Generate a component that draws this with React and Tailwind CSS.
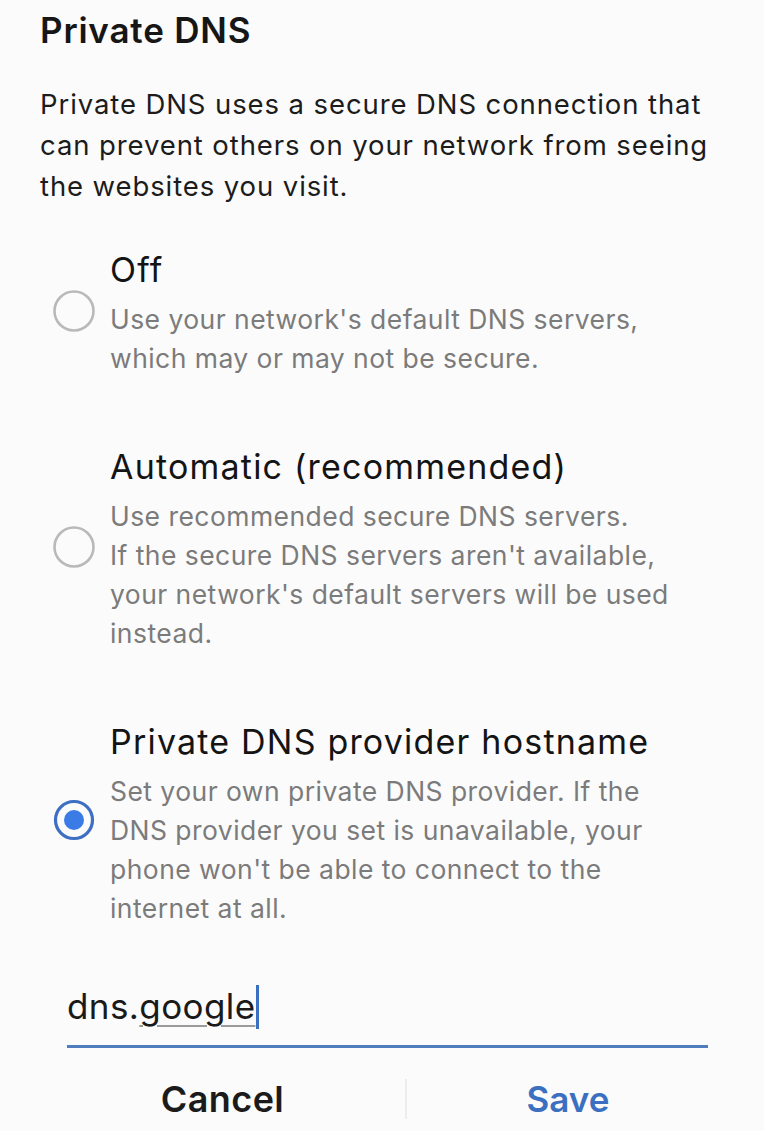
import React from "react";

const options = [
  {
    title: "Off",
    lines: ["Use your network's default DNS servers,", "which may or may not be secure."],
    selected: false,
  },
  {
    title: "Automatic (recommended)",
    lines: [
      "Use recommended secure DNS servers.",
      "If the secure DNS servers aren't available,",
      "your network's default servers will be used",
      "instead.",
    ],
    selected: false,
  },
  {
    title: "Private DNS provider hostname",
    lines: [
      "Set your own private DNS provider. If the",
      "DNS provider you set is unavailable, your",
      "phone won't be able to connect to the",
      "internet at all.",
    ],
    selected: true,
  },
];

function Radio({ selected }) {
  return (
    <svg width="44" height="44" viewBox="0 0 44 44" className="shrink-0">
      {selected ? (
        <>
          <circle cx="22" cy="22" r="18.5" fill="none" stroke="#3d6fc2" strokeWidth="3.2" />
          <circle cx="22" cy="22" r="10" fill="#3b7be6" />
        </>
      ) : (
        <circle cx="22" cy="22" r="19.5" fill="none" stroke="#b9b9b9" strokeWidth="2.6" />
      )}
    </svg>
  );
}

function Option({ title, lines, selected }) {
  return (
    <div className="flex items-center">
      <div
        className={
          "w-[70px] flex justify-start pl-[12px] " + (selected ? "mt-[-10px]" : "mt-[-6px]")
        }
      >
        <Radio selected={selected} />
      </div>
      <div className="flex flex-col">
        <div className="text-[34px] leading-[40px] tracking-[1.2px] text-[#141414]">{title}</div>
        <div className="text-[26.5px] leading-[39px] tracking-[0.45px] text-[#7b7b7b] mt-[9.5px]">
          {lines.map((l) => (
            <div key={l}>{l}</div>
          ))}
        </div>
      </div>
    </div>
  );
}

export default function App() {
  return (
    <div
      className="w-[764px] h-[1131px] overflow-hidden bg-[#fbfbfb] flex flex-col"
      style={{ fontFamily: "Inter, 'Noto Sans', sans-serif" }}
    >
      <div className="pl-[40px] pt-[9px] text-[35px] leading-[42px] tracking-[0.8px] font-semibold text-[#161616]">
        Private DNS
      </div>
      <div className="pl-[40px] pt-[32.5px] text-[27.5px] leading-[41px] tracking-[0.9px] text-[#1c1c1c]">
        <div>Private DNS uses a secure DNS connection that</div>
        <div>can prevent others on your network from seeing</div>
        <div>the websites you visit.</div>
      </div>
      <div className="flex flex-col gap-[69.5px] pl-[40px] pt-[43.5px]">
        {options.map((o) => (
          <Option key={o.title} {...o} />
        ))}
      </div>
      <div className="pl-[67px] pr-[56px] pt-[56.5px]">
        <div className="flex items-center h-[44px] text-[35px] leading-[44px] tracking-[0.4px] text-[#1a1a1a]">
          <span>dns.</span>
          <span className="underline decoration-[#9a9a9a] decoration-2 underline-offset-[6px]">google</span>
          <span className="w-[3px] h-[44px] bg-[#3b6fc2] ml-[1px] mt-[2px]" />
        </div>
        <div className="h-[3px] bg-[#4f7dbd] mt-[17px]" />
      </div>
      <div className="flex items-center pl-[40px] pt-[29px]">
        <button className="w-[365px] h-[44px] leading-[44px] text-center text-[36px] tracking-[0.4px] font-semibold text-[#1b1b1b]">
          Cancel
        </button>
        <div className="w-[2px] h-[40px] bg-[#ececec]" />
        <button className="w-[322px] h-[44px] leading-[44px] text-center text-[35px] font-semibold text-[#3b6fbf]">
          Save
        </button>
      </div>
    </div>
  );
}
